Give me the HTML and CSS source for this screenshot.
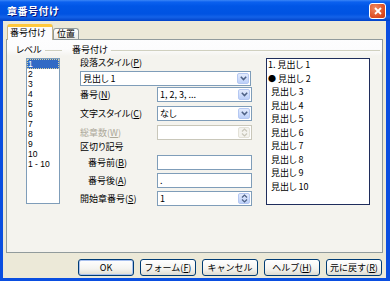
FILE: index.html
```html
<!DOCTYPE html>
<html lang="ja">
<head>
    <meta charset="UTF-8">
    <meta name="viewport" content="width=device-width, initial-scale=1.0">
    <title>章番号付け</title>
    <link rel="stylesheet" href="styles.css">
</head>
<body>

<div class="window">
    <div class="titlebar">
        <span class="title">章番号付け</span>
        <span class="close-btn">
            <svg width="8" height="8" viewBox="0 0 8 8"><path d="M1 1L7 7M7 1L1 7" stroke="#fff" stroke-width="1.8"/></svg>
        </span>
    </div>

    <div class="frame">
        <div class="tabs">
            <div class="tab active">番号付け</div>
            <div class="tab">位置</div>
        </div>

        <div class="panel">
            <div class="level-group">
                <div class="group-head"><span>レベル</span><i class="rule"></i></div>
                <ul class="level-list">
                    <li class="selected">1</li>
                    <li>2</li>
                    <li>3</li>
                    <li>4</li>
                    <li>5</li>
                    <li>6</li>
                    <li>7</li>
                    <li>8</li>
                    <li>9</li>
                    <li>10</li>
                    <li>1 - 10</li>
                </ul>
            </div>

            <div class="num-group">
                <div class="group-head"><span>番号付け</span><i class="rule"></i></div>
                <div class="num-body">
                    <div class="form">
                        <div class="label first">段落スタイル(<u>P</u>)</div>
                        <div class="combo wide">
                            <span>見出し 1</span>
                            <span class="drop"><svg width="7" height="5" viewBox="0 0 7 5"><path d="M0.8 0.8L3.5 3.6L6.2 0.8" fill="none" stroke="#4d6185" stroke-width="1.5"/></svg></span>
                        </div>

                        <div class="row r1">
                            <span class="row-label">番号(<u>N</u>)</span>
                            <div class="combo">
                                <span>1, 2, 3, ...</span>
                                <span class="drop"><svg width="7" height="5" viewBox="0 0 7 5"><path d="M0.8 0.8L3.5 3.6L6.2 0.8" fill="none" stroke="#4d6185" stroke-width="1.5"/></svg></span>
                            </div>
                        </div>
                        <div class="row r2">
                            <span class="row-label">文字スタイル(<u>C</u>)</span>
                            <div class="combo">
                                <span>なし</span>
                                <span class="drop"><svg width="7" height="5" viewBox="0 0 7 5"><path d="M0.8 0.8L3.5 3.6L6.2 0.8" fill="none" stroke="#4d6185" stroke-width="1.5"/></svg></span>
                            </div>
                        </div>
                        <div class="row r2">
                            <span class="row-label disabled">総章数(<u>W</u>)</span>
                            <div class="combo spin off">
                                <span></span>
                                <span class="spin-btn"><svg width="7" height="9" viewBox="0 0 7 9"><path d="M1 3.5L3.5 1L6 3.5M1 5.5L3.5 8L6 5.5" fill="none" stroke="#c9c7ba" stroke-width="1.2"/></svg></span>
                            </div>
                        </div>

                        <div class="label sep">区切り記号</div>
                        <div class="row r3">
                            <span class="row-label sub">番号前(<u>B</u>)</span>
                            <div class="combo"><span></span></div>
                        </div>
                        <div class="row r4">
                            <span class="row-label sub">番号後(<u>A</u>)</span>
                            <div class="combo"><span>.</span></div>
                        </div>
                        <div class="row r4">
                            <span class="row-label">開始章番号(<u>S</u>)</span>
                            <div class="combo spin">
                                <span>1</span>
                                <span class="spin-btn on"><svg width="7" height="9" viewBox="0 0 7 9"><path d="M1 3.5L3.5 1L6 3.5M1 5.5L3.5 8L6 5.5" fill="none" stroke="#4d6185" stroke-width="1.2"/></svg></span>
                            </div>
                        </div>
                    </div>

                    <div class="preview">
                        <div class="pv">1. 見出し 1</div>
                        <div class="pv"><span class="dot">●</span> 見出し 2</div>
                        <div class="pv ind">見出し 3</div>
                        <div class="pv ind">見出し 4</div>
                        <div class="pv ind">見出し 5</div>
                        <div class="pv ind">見出し 6</div>
                        <div class="pv ind">見出し 7</div>
                        <div class="pv ind">見出し 8</div>
                        <div class="pv ind">見出し 9</div>
                        <div class="pv ind">見出し 10</div>
                    </div>
                </div>
            </div>
        </div>

        <div class="buttons">
            <button class="default">OK</button>
            <button>フォーム(<u>F</u>)</button>
            <button>キャンセル</button>
            <button>ヘルプ(<u>H</u>)</button>
            <button>元に戻す(<u>R</u>)</button>
        </div>
    </div>
</div>

</body>
</html>
```

FILE: styles.css
```css
body {
    margin: 0;
    font-family: "Noto Sans CJK JP", "Liberation Sans", sans-serif;
    font-size: 9px;
    font-feature-settings: "palt";
    color: #000;
}
u {
    text-decoration: underline;
}
.window {
    width: 390px;
    height: 281px;
    display: flex;
    flex-direction: column;
    background-color: #ece9d8;
}
.titlebar {
    height: 21px;
    flex: none;
    display: flex;
    align-items: center;
    justify-content: space-between;
    padding: 0 4px 0 7px;
    background: linear-gradient(#3a86f6 0, #0b61ef 2px, #0056e6 6px, #0053e2 14px, #1462e8 17px, #0042c8 21px);
}
.title {
    color: #fff;
    font-weight: bold;
    font-size: 10px;
    line-height: 12px;
    letter-spacing: 0.5px;
    text-shadow: 1px 1px 0 #0a1a86;
}
.close-btn {
    width: 15px;
    height: 14px;
    border: 1px solid #fff;
    border-radius: 3px;
    background: radial-gradient(circle at 35% 30%, #f08a62, #db4a20 70%, #c23d18);
    display: flex;
    align-items: center;
    justify-content: center;
}
.frame {
    flex: 1;
    display: flex;
    flex-direction: column;
    border: 3px solid #0a4ee0;
    border-top: none;
    border-right-width: 4px;
    padding-top: 4px;
}
.tabs {
    height: 14px;
    display: flex;
    align-items: flex-end;
    margin-left: 4px;
}
.tab {
    box-sizing: border-box;
    height: 11px;
    padding: 0 3px;
    line-height: 10px;
    border: 1px solid #919b9c;
    border-bottom: none;
    border-radius: 3px 3px 0 0;
    background: linear-gradient(#fff, #ecebe6);
}
.tab.active {
    position: relative;
    z-index: 1;
    height: 16px;
    width: 46px;
    margin-bottom: -1px;
    padding: 0 2px;
    line-height: 12px;
    border-top: 3px solid #ffc83c;
    border-left-color: #c7b48a;
    border-right-color: #c7b48a;
    background: #fcfcfe;
}
.panel {
    box-sizing: border-box;
    height: 214px;
    margin: 0 3px;
    padding-top: 4px;
    border: 1px solid #919b9c;
    background: linear-gradient(#fdfdfe 0, #fcfcfd 9px, #f4f3ee 16px);
    display: flex;
}
.group-head {
    height: 12px;
    line-height: 12px;
    display: flex;
    align-items: center;
}
.rule {
    flex: 1;
    margin-left: 3px;
    border-top: 1px solid #d0d0bf;
}
.level-group {
    box-sizing: border-box;
    width: 63px;
    padding: 0 8px 0 9px;
}
.level-list {
    box-sizing: border-box;
    width: 34px;
    height: 146px;
    margin: 2px 0 0 10px;
    padding: 0;
    list-style: none;
    border: 1px solid #7f9db9;
    background: #fff;
    font-family: "Liberation Sans", sans-serif;
    font-size: 8.5px;
}
.level-list li {
    height: 10px;
    line-height: 10px;
    padding-left: 1px;
}
.level-list li.selected {
    background: #316ac5;
    color: #fff;
    outline: 1px dotted #d8d2a0;
    outline-offset: -1px;
}
.num-group {
    flex: 1;
    padding: 0 2px;
}
.num-body {
    display: flex;
    padding-left: 8px;
}
.form {
    width: 172px;
}
.label {
    height: 12px;
    line-height: 12px;
}
.label.first {
    margin-top: 1px;
}
.label.sep {
    margin-top: 1px;
}
.combo {
    box-sizing: border-box;
    flex: 1;
    height: 15px;
    display: flex;
    align-items: center;
    justify-content: space-between;
    padding-left: 2px;
    border: 1px solid #7f9db9;
    background: #fff;
    line-height: 12px;
}
.combo.wide {
    margin-top: 2px;
    width: 171px;
}
.combo.off {
    border-color: #c9c7ba;
}
.drop,
.spin-btn {
    box-sizing: border-box;
    width: 12px;
    height: 11px;
    margin-right: 1px;
    border: 1px solid #b5c8f2;
    border-radius: 2px;
    background: linear-gradient(#e3ebfd, #bcd0f9);
    display: flex;
    align-items: center;
    justify-content: center;
}
.spin-btn {
    border-color: #e4e2d8;
    background: #f4f3ee;
}
.spin-btn.on {
    border-color: #b5c8f2;
    background: linear-gradient(#e3ebfd, #bcd0f9);
}
.row {
    display: flex;
    align-items: center;
}
.row.r1 {
    margin-top: 1px;
}
.row.r2 {
    margin-top: 4px;
}
.row.r3 {
    margin-top: 2px;
}
.row.r4 {
    margin-top: 3px;
}
.row-label {
    width: 77px;
    line-height: 12px;
}
.row-label.sub {
    box-sizing: border-box;
    padding-left: 8px;
}
.row-label.disabled {
    color: #aca899;
}
.preview {
    box-sizing: border-box;
    width: 104px;
    height: 147px;
    margin: 2px 0 0 14px;
    border: 1px solid #1f2d5c;
    background: #fff;
    padding-left: 1px;
}
.pv {
    height: 13.5px;
    line-height: 12px;
}
.pv.ind {
    padding-left: 3px;
}
.dot {
    font-size: 8px;
}
.buttons {
    display: flex;
    justify-content: flex-end;
    gap: 6px;
    margin-top: 6px;
    padding-right: 4px;
}
.buttons button {
    box-sizing: border-box;
    width: 56px;
    height: 17px;
    padding: 0;
    font-family: inherit;
    font-size: 9px;
    line-height: 12px;
    color: #000;
    border: 1px solid #003c74;
    border-radius: 3px;
    background: linear-gradient(#fff 0, #f4f3ef 60%, #dedbd0 100%);
}
.buttons button.default {
    box-shadow: inset 0 0 0 1px #a9c1ef;
}
```
